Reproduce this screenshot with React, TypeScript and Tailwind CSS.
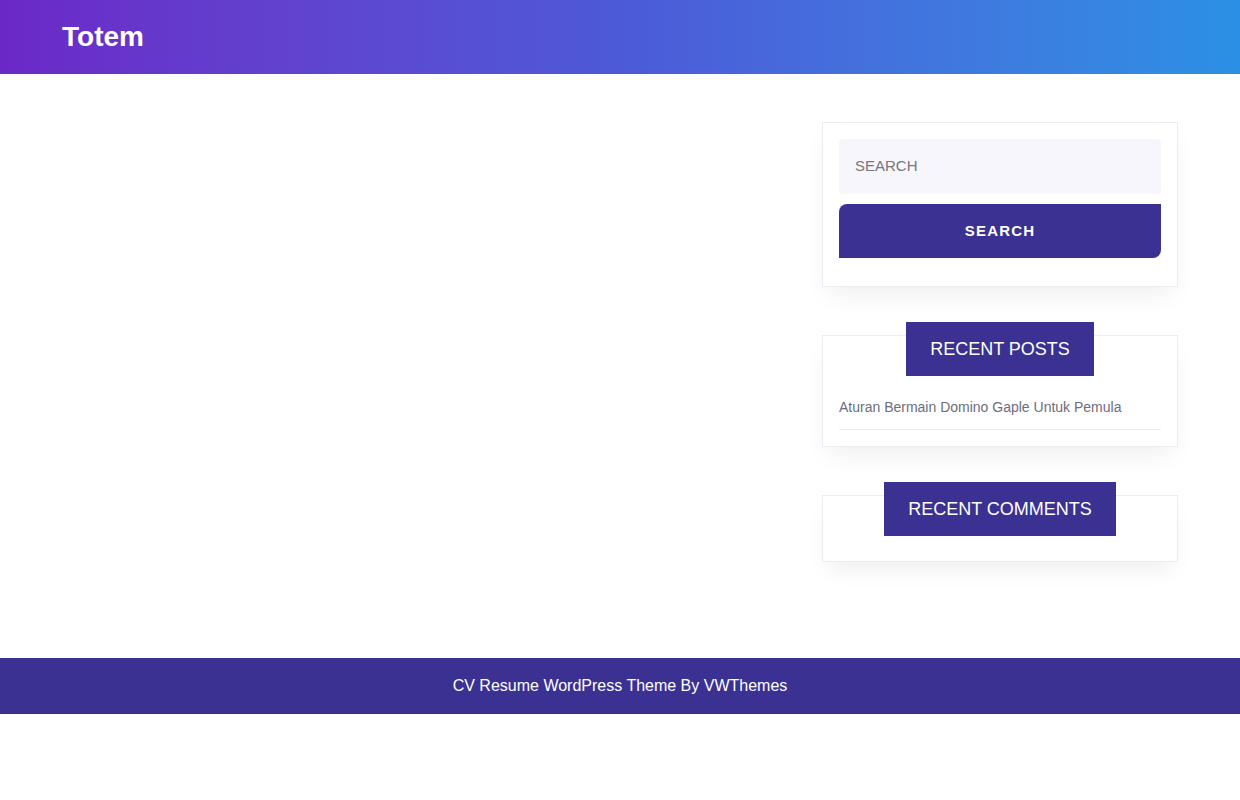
const SANS = "font-['Liberation_Sans',Arial,sans-serif]";

function Card({ children, className = '' }: { children: React.ReactNode; className?: string }) {
  return (
    <div className={`border border-[#ececf2] bg-white shadow-[0_12px_24px_-6px_rgba(0,0,0,0.07)] ${className}`}>
      {children}
    </div>
  );
}

function WidgetTitle({ title }: { title: string }) {
  return (
    <div className="-mt-[14px] flex justify-center">
      <h2 className="flex h-[54px] items-center bg-[#3a3192] px-6 text-[18px] font-normal text-white">{title}</h2>
    </div>
  );
}

export default function App() {
  return (
    <div className={`min-h-[800px] bg-white ${SANS}`}>
      <header className="flex h-[74px] items-center bg-gradient-to-r from-[#6b28c7] via-[#4c5ad8] to-[#2a90e4] px-[62px]">
        <h1 className="text-[28px] font-bold text-white">Totem</h1>
      </header>

      <main className="flex justify-between px-[62px] pt-12 pb-24">
        <div className="flex-1" />
        <aside className="flex w-[356px] flex-col gap-12">
          <Card className="p-4 pb-7">
            <input
              type="text"
              placeholder="SEARCH"
              className="h-[55px] w-full rounded bg-[#f7f6fc] px-4 pb-0.5 text-[15px] text-[#555] placeholder:text-[#777] focus:outline-none"
            />
            <button
              type="button"
              className="mt-2.5 h-[54px] w-full rounded-tl-lg rounded-br-lg bg-[#3a3192] text-[15px] font-bold tracking-[0.08em] text-white"
            >
              SEARCH
            </button>
          </Card>

          <Card className="px-4 pb-4">
            <WidgetTitle title="RECENT POSTS" />
            <ul className="mt-[21px]">
              <li className="border-b border-[#ececf2] pb-[11px] text-[14px] text-[#6d6d7d]">
                Aturan Bermain Domino Gaple Untuk Pemula
              </li>
            </ul>
          </Card>

          <Card className="h-[67px] px-4">
            <WidgetTitle title="RECENT COMMENTS" />
          </Card>
        </aside>
      </main>

      <footer className="flex h-[56px] items-center justify-center bg-[#3a3192] text-[16px] text-white">
        CV Resume WordPress Theme By VWThemes
      </footer>
    </div>
  );
}
